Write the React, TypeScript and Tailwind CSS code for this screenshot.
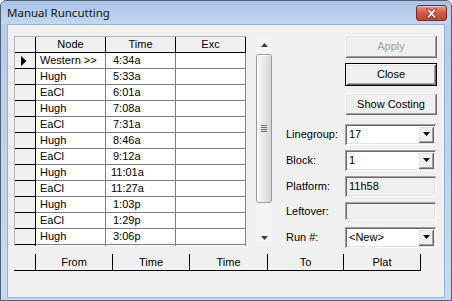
import React from "react";

const rows: [string, string][] = [
  ["Western >>", "4:34a"],
  ["Hugh", "5:33a"],
  ["EaCl", "6:01a"],
  ["Hugh", "7:08a"],
  ["EaCl", "7:31a"],
  ["Hugh", "8:46a"],
  ["EaCl", "9:12a"],
  ["Hugh", "11:01a"],
  ["EaCl", "11:27a"],
  ["Hugh", "1:03p"],
  ["EaCl", "1:29p"],
  ["Hugh", "3:06p"],
  ["", ""],
];

const sunken =
  "shadow-[inset_1px_1px_0_#a0a0a0,inset_-1px_-1px_0_#ffffff,inset_2px_2px_0_#696969,inset_-2px_-2px_0_#e3e3e3]";
const raised =
  "shadow-[inset_1px_1px_0_#ffffff,inset_-1px_-1px_0_#696969,inset_2px_2px_0_#e3e3e3,inset_-2px_-2px_0_#a0a0a0]";

function DownTri({ color = "#000" }: { color?: string }) {
  return (
    <svg width="7" height="4" viewBox="0 0 7 4">
      <path d="M0 0H7L3.5 4Z" fill={color} />
    </svg>
  );
}

function Combo({ value }: { value: string }) {
  return (
    <div className={`w-[91px] h-[21px] bg-white flex items-center ${sunken}`}>
      <span className="pl-[4px] flex-1 leading-none">{value}</span>
      <div className={`w-[16px] h-[17px] mr-[2px] bg-[#f0f0f0] flex items-center justify-center ${raised}`}>
        <DownTri />
      </div>
    </div>
  );
}

function Field({ value, h }: { value: string; h: string }) {
  return (
    <div className={`w-[91px] ${h} bg-[#f0f0f0] flex items-center ${sunken}`}>
      <span className="pl-[4px] leading-none">{value}</span>
    </div>
  );
}

export default function App() {
  return (
    <div
      className="w-[452px] h-[301px] bg-white overflow-hidden text-[11px] text-black"
      style={{ fontFamily: '"Liberation Sans", Arial, sans-serif' }}
    >
      <div className="w-full h-full rounded-t-[6px] border border-[#4f6076] bg-gradient-to-b from-[#b3cbe9] to-[#c8daf0] flex flex-col">
        {/* Title bar */}
        <div className="h-[23px] flex items-start justify-between pl-[6px] pr-[4px] bg-gradient-to-b from-[#a9c3e6] to-[#c3d7ef] rounded-t-[5px]">
          <span
            className="text-[11.5px] mt-[4px] leading-[16px] text-[#0f1520]"
            style={{ fontFamily: '"Noto Sans", "Open Sans", sans-serif' }}
          >
            Manual Runcutting
          </span>
          <div className="mt-[4px] w-[31px] h-[16px] rounded-[3px] border border-[#7b2a1e] bg-gradient-to-b from-[#e49a88] via-[#cf5a43] to-[#c2432c] flex items-center justify-center shadow-[inset_0_1px_0_#f2c0b4]">
            <svg width="13" height="11" viewBox="0 0 13 11">
              <path
                d="M1 1H4.2L6.5 3.6L8.8 1H12L8.2 5.5L12 10H8.8L6.5 7.4L4.2 10H1L4.8 5.5Z"
                fill="#ffffff"
                stroke="#6b2a22"
                strokeWidth="0.9"
                strokeLinejoin="round"
              />
            </svg>
          </div>
        </div>

        {/* Client */}
        <div className="flex-1 mx-[6px] mb-[2px] border border-[#8eb3d9] bg-[#f0f0f0] pl-[6px] pt-[11px] flex flex-col">
          <div className="h-[210px] flex items-start">
            {/* Grid */}
            <div className="w-[232px] h-[210px] overflow-hidden border-l border-t border-[#b4b4b4] flex flex-col">
              <div className="flex h-[16px] shrink-0">
                <div className="w-[21px] border-r border-b border-black bg-[#f0f0f0]" />
                <div className="w-[70px] border-r border-b border-black flex items-center justify-center leading-none">Node</div>
                <div className="w-[70px] border-r border-b border-black flex items-center justify-center leading-none">Time</div>
                <div className="w-[70px] border-r border-b border-black flex items-center justify-center leading-none">Exc</div>
              </div>
              {rows.map((r, i) => (
                <div key={i} className="flex h-[16px] shrink-0">
                  <div className="w-[21px] border-r border-b border-black bg-[#f0f0f0] flex items-center pl-[6px]">
                    {i === 0 && (
                      <svg width="6" height="10" viewBox="0 0 6 10">
                        <path d="M0 0L5.5 5L0 10Z" fill="#000" />
                      </svg>
                    )}
                  </div>
                  <div className="w-[70px] border-r border-b border-[#808080] bg-white flex items-center pl-[4px] leading-none whitespace-nowrap">
                    {r[0]}
                  </div>
                  <div
                    className={`w-[70px] border-r border-b border-[#808080] bg-white flex items-center leading-none ${
                      r[1].length === 6 ? "pl-[5px]" : "pl-[7px]"
                    }`}
                  >
                    {r[1]}
                  </div>
                  <div className="w-[70px] border-r border-b border-[#808080] bg-white" />
                </div>
              ))}
            </div>

            {/* Scrollbar */}
            <div className="ml-[10px] w-[16px] h-[210px] bg-[#f4f4f4] flex flex-col shrink-0">
              <div className="h-[17px] flex items-center justify-center">
                <svg width="7" height="4" viewBox="0 0 7 4">
                  <path d="M0 4H7L3.5 0Z" fill="#3c3c3c" />
                </svg>
              </div>
              <div className="mt-[1px] h-[149px] border border-[#9a9a9a] rounded-[3px] bg-gradient-to-r from-[#f7f7f7] via-[#e8e8e8] to-[#d4d4d4] flex items-center justify-center shadow-[inset_1px_1px_0_#ffffff]">
                <div className="flex flex-col gap-[1px]">
                  <div className="w-[6px] h-[1px] bg-[#6e6e6e]" />
                  <div className="w-[6px] h-[1px] bg-[#6e6e6e]" />
                  <div className="w-[6px] h-[1px] bg-[#6e6e6e]" />
                  <div className="w-[6px] h-[1px] bg-[#6e6e6e]" />
                </div>
              </div>
              <div className="flex-1" />
              <div className="h-[17px] flex items-center justify-center">
                <DownTri color="#3c3c3c" />
              </div>
            </div>

            {/* Right panel */}
            <div className="pl-[14px] flex flex-col shrink-0">
              <div
                className={`-mt-[1px] ml-[59px] w-[92px] h-[23px] bg-[#f0f0f0] flex items-center justify-center text-[#a0a0a0] ${raised}`}
              >
                Apply
              </div>
              <div className="mt-[5px] ml-[59px] w-[92px] h-[23px] border border-black bg-[#f0f0f0] flex items-center justify-center shadow-[inset_1px_1px_0_#ffffff,inset_-1px_-1px_0_#696969,inset_2px_2px_0_#e3e3e3,inset_-2px_-2px_0_#a0a0a0]">
                Close
              </div>
              <div
                className={`mt-[7px] ml-[59px] w-[92px] h-[22px] bg-[#f0f0f0] flex items-center justify-center ${raised}`}
              >
                Show Costing
              </div>
              <div className="mt-[6px] flex flex-col">
                <div className="h-[26px] flex items-center">
                  <span className="w-[59px]">Linegroup:</span>
                  <Combo value="17" />
                </div>
                <div className="h-[26px] flex items-center">
                  <span className="w-[59px]">Block:</span>
                  <Combo value="1" />
                </div>
                <div className="h-[26px] flex items-center">
                  <span className="w-[59px]">Platform:</span>
                  <Field value="11h58" h="h-[21px]" />
                </div>
                <div className="h-[24px] flex items-center">
                  <span className="w-[59px]">Leftover:</span>
                  <Field value="" h="h-[18px]" />
                </div>
                <div className="h-[28px] flex items-center">
                  <span className="w-[59px]">Run #:</span>
                  <Combo value="<New>" />
                </div>
              </div>
            </div>
          </div>

          {/* Bottom header */}
          <div className="mt-[8px] flex h-[17px] w-[407px] border-b border-black">
            <div className="w-[22px] border-r border-black" />
            <div className="w-[77px] border-r border-black flex items-center justify-center leading-none">From</div>
            <div className="w-[77px] border-r border-black flex items-center justify-center leading-none">Time</div>
            <div className="w-[78px] border-r border-black flex items-center justify-center leading-none">Time</div>
            <div className="w-[76px] border-r border-black flex items-center justify-center leading-none">To</div>
            <div className="w-[77px] border-r border-black flex items-center justify-center leading-none">Plat</div>
          </div>
        </div>
      </div>
    </div>
  );
}
